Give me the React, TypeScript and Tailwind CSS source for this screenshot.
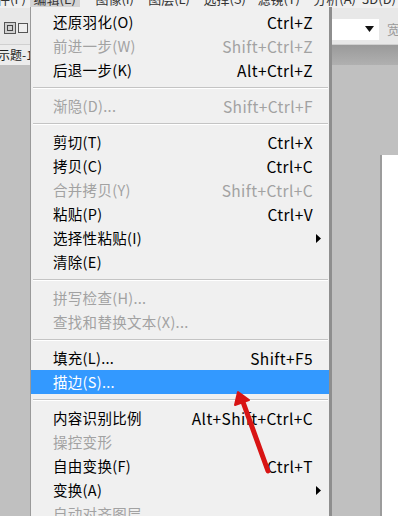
import { Fragment } from "react";

type Item =
  | { kind: "sep" }
  | { kind: "item"; label: string; shortcut?: string; disabled?: boolean; sub?: boolean; active?: boolean };

const ITEMS: Item[] = [
  { kind: "item", label: "还原羽化(O)", shortcut: "Ctrl+Z" },
  { kind: "item", label: "前进一步(W)", shortcut: "Shift+Ctrl+Z", disabled: true },
  { kind: "item", label: "后退一步(K)", shortcut: "Alt+Ctrl+Z" },
  { kind: "sep" },
  { kind: "item", label: "渐隐(D)...", shortcut: "Shift+Ctrl+F", disabled: true },
  { kind: "sep" },
  { kind: "item", label: "剪切(T)", shortcut: "Ctrl+X" },
  { kind: "item", label: "拷贝(C)", shortcut: "Ctrl+C" },
  { kind: "item", label: "合并拷贝(Y)", shortcut: "Shift+Ctrl+C", disabled: true },
  { kind: "item", label: "粘贴(P)", shortcut: "Ctrl+V" },
  { kind: "item", label: "选择性粘贴(I)", sub: true },
  { kind: "item", label: "清除(E)" },
  { kind: "sep" },
  { kind: "item", label: "拼写检查(H)...", disabled: true },
  { kind: "item", label: "查找和替换文本(X)...", disabled: true },
  { kind: "sep" },
  { kind: "item", label: "填充(L)...", shortcut: "Shift+F5" },
  { kind: "item", label: "描边(S)...", active: true },
  { kind: "sep" },
  { kind: "item", label: "内容识别比例", shortcut: "Alt+Shift+Ctrl+C" },
  { kind: "item", label: "操控变形", disabled: true },
  { kind: "item", label: "自由变换(F)", shortcut: "Ctrl+T" },
  { kind: "item", label: "变换(A)", sub: true },
  { kind: "item", label: "自动对齐图层", disabled: true },
];

const MENUBAR = [
  { label: "文件(F)", w: "w-[30px]" },
  { label: "编辑(E)", w: "w-[50px]", on: true },
  { label: "图像(I)", w: "w-[58px]" },
  { label: "图层(L)", w: "w-[56px]" },
  { label: "选择(S)", w: "w-[56px]" },
  { label: "滤镜(T)", w: "w-[54px]" },
  { label: "分析(A)", w: "w-[56px]" },
  { label: "3D(D)", w: "w-[40px]" },
];

export default function App() {
  return (
    <div
      className="relative flex h-[516px] w-[398px] flex-col overflow-hidden bg-[#c0c0c0] text-[14px]"
      style={{ fontFamily: '"Noto Sans CJK SC", "Noto Sans", sans-serif' }}
    >
      {/* menubar, only the bottom edge shows */}
      <div className="flex h-[8px] shrink-0 overflow-hidden bg-[#f0f0f0] text-[13px] text-[#333]">
        {MENUBAR.map((m) => (
          <div key={m.label} className={`${m.w} flex shrink-0 justify-end overflow-hidden ${m.on ? "bg-[#d4d4d4]" : ""}`}>
            <span className="-mt-[10px] whitespace-nowrap pr-1 leading-[18px]">{m.label}</span>
          </div>
        ))}
      </div>

      {/* options bar */}
      <div className="flex h-[37px] shrink-0 items-center border-b border-[#d0d0d0] bg-[#e8e8e8]">
        <div className="flex items-center gap-[2px] pl-[4px] pt-[3px]">
          <div className="h-[12px] w-[12px] border border-[#555] bg-[#cfcfcf] p-[2px]">
            <div className="h-full w-full border border-[#444]" />
          </div>
          <div className="h-[10px] w-[10px] border border-[#555] bg-[#eee]" />
        </div>
        <div className="flex-1" />
        <div className="mt-[6px] flex h-[21px] w-[48px] items-center justify-end bg-white pr-[5px]">
          <svg width="9" height="6" viewBox="0 0 9 6"><path d="M0 0h9L4.5 6z" fill="#111" /></svg>
        </div>
        <span className="ml-[8px] mr-[-2px] mt-[6px] text-[13px] text-[#9a9a9a]">宽</span>
      </div>

      {/* document tabs */}
      <div className="flex h-[20px] shrink-0">
        <div className="flex w-[40px] items-center overflow-hidden bg-[#ececec] text-[12px] text-[#222]">
          <span className="-ml-[2px] whitespace-nowrap">示题-1</span>
        </div>
        <div className="flex-1 bg-[#c8c8c8]" />
        <div className="w-[70px] bg-gradient-to-b from-[#9a9a9a] to-[#b0b0b0]" />
      </div>

      {/* workspace */}
      <div className="flex flex-1 justify-end pt-[90px]">
        <div className="w-[18px] border-l-2 border-[#9c9c9c] bg-white" />
      </div>

      {/* edit menu */}
      <div className="absolute left-[30px] top-[7px] w-[299px] border-l border-[#9a9a9a] bg-[#f0f0f0] pt-[3px] shadow-[3px_0_0_#8e8e8e]">
        {ITEMS.map((it, i) =>
          it.kind === "sep" ? (
            <div key={i} className="flex h-[12px] flex-col justify-center pl-[2px] pr-[1px]">
              <div className="h-px bg-[#c4c4c4]" />
              <div className="h-px bg-white" />
            </div>
          ) : (
            <Fragment key={i}>
              <div
                className={`flex h-[24px] items-center pl-[22px] pr-[16px] leading-[24px] ${
                  it.active ? "bg-[#3399ff] text-white" : it.disabled ? "text-[#a2a2a2]" : "text-black"
                }`}
              >
                <span className="whitespace-nowrap text-[14.5px] tracking-[0.3px]">{it.label}</span>
                <span className="flex-1" />
                {it.shortcut && (
                  <span className="whitespace-nowrap text-[15.5px] tracking-[0.4px]">{it.shortcut}</span>
                )}
                {it.sub && (
                  <svg width="5" height="9" viewBox="0 0 5 9" className="-mr-[8px]">
                    <path d="M0 0l5 4.5L0 9z" fill="#000" />
                  </svg>
                )}
              </div>
            </Fragment>
          ),
        )}
      </div>

      {/* red annotation arrow */}
      <svg className="pointer-events-none absolute left-0 top-0" width="398" height="516" viewBox="0 0 398 516">
        <path d="M268 471 L243 402" stroke="#d81414" strokeWidth="5" strokeLinecap="round" fill="none" />
        <path d="M238 392 L235 405 L249 400 Z" fill="#d81414" stroke="#d81414" strokeWidth="2" strokeLinejoin="round" />
      </svg>
    </div>
  );
}
